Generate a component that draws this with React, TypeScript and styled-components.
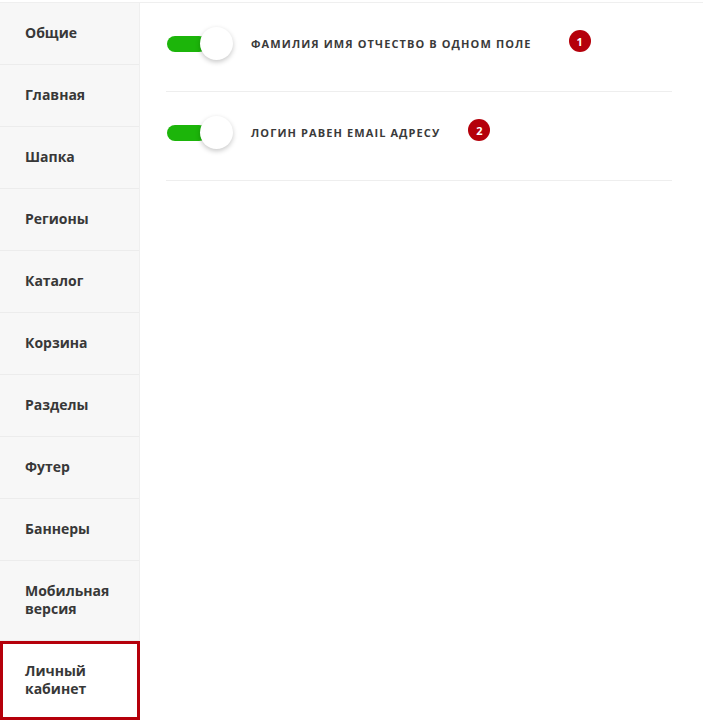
import * as React from "react";
import styled, { createGlobalStyle } from "styled-components";

const GlobalStyle = createGlobalStyle`
  html, body {
    margin: 0;
    padding: 0;
    background: #fff;
    font-family: "Open Sans", "Liberation Sans", sans-serif;
  }
`;

const Page = styled.div`
  display: flex;
  align-items: flex-start;
  margin-top: 2px;
  border-top: solid 1px #efefef;
  width: 703px;
`;

const Sidebar = styled.nav`
  width: 139px;
  flex-shrink: 0;
  background: #f7f7f7;
  border-right: solid 1px #efefef;
  display: flex;
  flex-direction: column;
`;

const NavItem = styled.div<{ $active?: boolean }>`
  box-sizing: border-box;
  padding: ${(p) => (p.$active ? "18px 22px 19px" : "21px 25px 22px")};
  font-size: 14px;
  font-weight: 700;
  line-height: 18px;
  color: #383838;
  border-bottom: solid 1px #ececec;
  ${(p) =>
    p.$active &&
    `
    background: #fff;
    border: solid 3px #b5000b;
    margin-right: -1px;
  `}
`;

const Content = styled.main`
  flex: 1;
  padding: 0 31px 0 26px;
`;

const Row = styled.div`
  display: flex;
  align-items: center;
  box-sizing: border-box;
  height: 89px;
  padding-bottom: 7px;
  border-bottom: solid 1px #eeeeee;
`;

const Toggle = styled.div`
  position: relative;
  width: 66px;
  height: 34px;
  flex-shrink: 0;
  margin-left: 1px;
  margin-top: 1px;
`;

const Track = styled.div`
  position: absolute;
  left: 0;
  top: 9px;
  width: 40px;
  height: 16px;
  border-radius: 8px;
  background: #1cb50a;
`;

const Knob = styled.div`
  position: absolute;
  left: 33px;
  top: 0;
  width: 33px;
  height: 33px;
  border-radius: 50%;
  background: #fff;
  box-shadow: 0 2px 5px rgba(0, 0, 0, 0.22);
`;

const Label = styled.span`
  margin-left: 18px;
  font-size: 11px;
  font-weight: 700;
  letter-spacing: 1.1px;
  text-transform: uppercase;
  color: #3a3a3a;
`;

const Badge = styled.span<{ $gap: number }>`
  margin-left: ${(p) => p.$gap}px;
  margin-bottom: 5px;
  width: 22px;
  height: 22px;
  border-radius: 50%;
  background: #b5000b;
  color: #fff;
  font-size: 11px;
  font-weight: 700;
  display: inline-flex;
  align-items: center;
  justify-content: center;
`;

const navItems = [
  "Общие",
  "Главная",
  "Шапка",
  "Регионы",
  "Каталог",
  "Корзина",
  "Разделы",
  "Футер",
  "Баннеры",
  "Мобильная версия",
];

const options = [
  { label: "Фамилия имя отчество в одном поле", badge: 1, gap: 37 },
  { label: "Логин равен email адресу", badge: 2, gap: 28 },
];

export default function App() {
  return (
    <>
      <GlobalStyle />
      <Page>
        <Sidebar>
          {navItems.map((name) => (
            <NavItem key={name}>{name}</NavItem>
          ))}
          <NavItem $active>Личный кабинет</NavItem>
        </Sidebar>
        <Content>
          {options.map((o) => (
            <Row key={o.badge}>
              <Toggle>
                <Track />
                <Knob />
              </Toggle>
              <Label>{o.label}</Label>
              <Badge $gap={o.gap}>{o.badge}</Badge>
            </Row>
          ))}
        </Content>
      </Page>
    </>
  );
}
